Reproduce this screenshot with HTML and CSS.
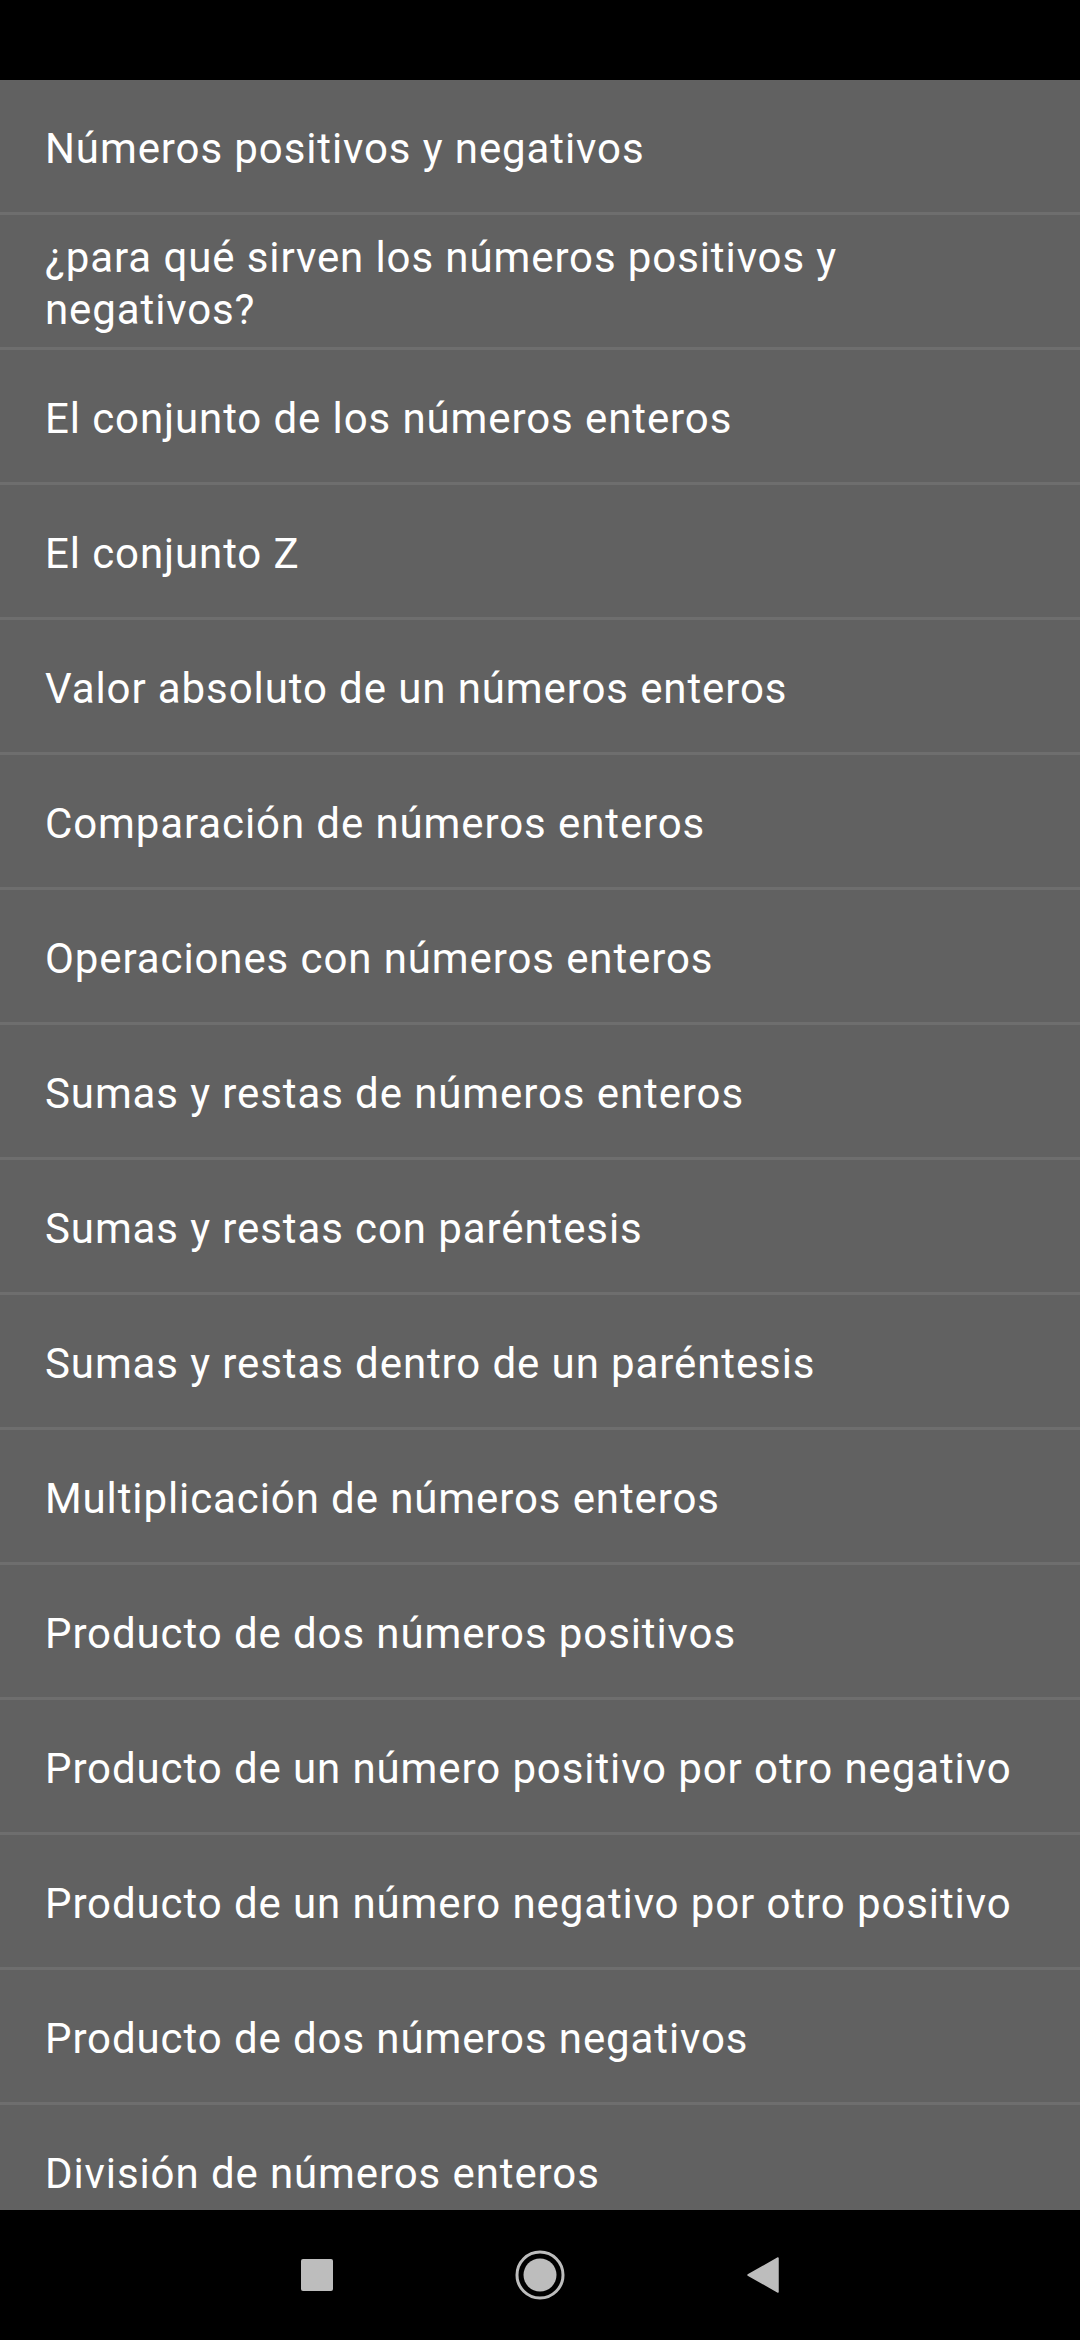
FILE: index.html
```html
<!DOCTYPE html>
<html lang="es">
<head>
    <meta charset="UTF-8">
    <meta name="viewport" content="width=device-width, initial-scale=1.0">
    <title>Números enteros</title>
    <link rel="stylesheet" href="styles.css">
</head>
<body>
    <div class="status-bar"></div>

    <ul class="temas">
        <li class="tema">Números positivos y negativos</li>
        <li class="tema">¿para qué sirven los números positivos y negativos?</li>
        <li class="tema">El conjunto de los números enteros</li>
        <li class="tema">El conjunto Z</li>
        <li class="tema">Valor absoluto de un números enteros</li>
        <li class="tema">Comparación de números enteros</li>
        <li class="tema">Operaciones con números enteros</li>
        <li class="tema">Sumas y restas de números enteros</li>
        <li class="tema">Sumas y restas con paréntesis</li>
        <li class="tema">Sumas y restas dentro de un paréntesis</li>
        <li class="tema">Multiplicación de números enteros</li>
        <li class="tema">Producto de dos números positivos</li>
        <li class="tema">Producto de un número positivo por otro negativo</li>
        <li class="tema">Producto de un número negativo por otro positivo</li>
        <li class="tema">Producto de dos números negativos</li>
        <li class="tema">División de números enteros</li>
    </ul>

    <!-- barra de navegacion -->
    <div class="nav-bar">
        <svg class="nav-icon" width="32" height="32" viewBox="0 0 32 32">
            <rect x="0" y="0" width="32" height="32" rx="2" fill="#bdbdbd"/>
        </svg>
        <svg class="nav-icon" width="50" height="50" viewBox="0 0 50 50">
            <circle cx="25" cy="25" r="23" fill="none" stroke="#bdbdbd" stroke-width="3"/>
            <circle cx="25" cy="25" r="16.5" fill="#bdbdbd"/>
        </svg>
        <svg class="nav-icon" width="32" height="36" viewBox="0 0 32 36">
            <path d="M31 1 L31 35 L1 18 Z" fill="#bdbdbd" stroke="#bdbdbd" stroke-width="1.5" stroke-linejoin="round"/>
        </svg>
    </div>
</body>
</html>
```

FILE: styles.css
```css
body {
    margin: 0;
    width: 1080px;
    height: 2340px;
    background-color: #000;
    font-family: Roboto, "Noto Sans", sans-serif;
    overflow: hidden;
    display: flex;
    flex-direction: column;
}
.status-bar {
    height: 80px;
    background-color: #000;
}
.temas {
    list-style: none;
    margin: 0;
    padding: 0;
    height: 2130px;
    overflow: hidden;
    background-color: #616161;
}
.tema {
    box-sizing: border-box;
    height: 135px;
    border-bottom: 3px solid #6e6e6e;
    padding: 5px 40px 0 45px;
    display: flex;
    align-items: center;
    color: #fff;
    font-size: 42px;
    letter-spacing: 0.9px;
    line-height: 52px;
}
.nav-bar {
    height: 130px;
    background-color: #000;
    display: flex;
    align-items: center;
    justify-content: center;
    gap: 182px;
}
```
